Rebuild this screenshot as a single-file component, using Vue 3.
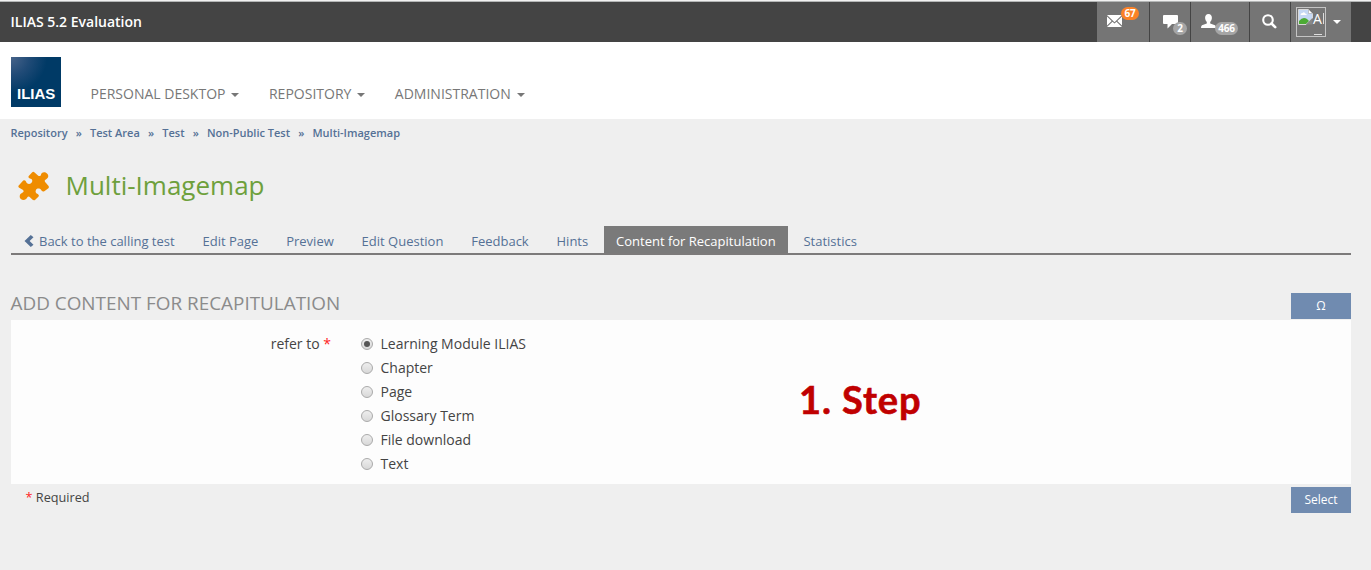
<script setup>
const menus = ['Personal Desktop', 'Repository', 'Administration']
const crumbs = ['Repository', 'Test Area', 'Test', 'Non-Public Test', 'Multi-Imagemap']
const tabs = ['Edit Page', 'Preview', 'Edit Question', 'Feedback', 'Hints', 'Content for Recapitulation', 'Statistics']
const activeTab = 'Content for Recapitulation'
const options = ['Learning Module ILIAS', 'Chapter', 'Page', 'Glossary Term', 'File download', 'Text']
</script>

<template>
  <div class="page">
    <div class="topbar">
      <div class="site">ILIAS 5.2 Evaluation</div>
      <div class="tools">
        <div class="tool mail">
          <svg width="15" height="12" viewBox="0 0 15 12">
            <path d="M0 0H15L7.5 7.2ZM0 1.4L4.7 5.9L0 10.5ZM15 1.4V10.5L10.3 5.9ZM5.5 6.7L7.5 8.6L9.5 6.7L15 12H0Z" fill="#fff" />
          </svg>
          <span class="badge hot">67</span>
        </div>
        <div class="tool chat">
          <svg width="15" height="14" viewBox="0 0 15 14">
            <path d="M1 0H14Q15 0 15 1V8Q15 9 14 9H9L4.5 13.5V9H1Q0 9 0 8V1Q0 0 1 0Z" fill="#fff" />
          </svg>
          <span class="badge">2</span>
        </div>
        <div class="tool user">
          <svg width="15" height="14" viewBox="0 0 15 14">
            <path d="M7.5 0C9.8 0 11 1.7 10.9 4C10.8 6 9.9 7 9.2 8V9.4L14 11.3Q15 11.8 15 14H0Q0 11.8 1 11.3L5.8 9.4V8C5.1 7 4.2 6 4.1 4C4 1.7 5.2 0 7.5 0Z" fill="#fff" />
          </svg>
          <span class="badge">466</span>
        </div>
        <div class="tool search">
          <svg width="15" height="15" viewBox="0 0 15 15" fill="none" stroke="#fff">
            <circle cx="6" cy="6" r="4.8" stroke-width="2.1" />
            <path d="M9.5 9.5L13.2 13.2" stroke-width="2.6" stroke-linecap="round" />
          </svg>
        </div>
        <div class="tool avatar">
          <div class="photo">
            <svg width="15" height="16" viewBox="0 0 15 16">
              <path d="M.5 .5H10.5L14.5 4.5V9L8 15.5H.5Z" fill="#c5d8f5" stroke="#d8d8d8" />
              <path d="M10.5 .5V4.5H14.5Z" fill="#fff" stroke="#aaa" stroke-width=".6" />
              <path d="M2.5 6Q2.5 4 4.5 4Q6 2.5 7.2 4.5Q9 4.5 8.7 6Z" fill="#fff" />
              <path d="M1 15V12Q5 7 9 10L11 12L8 15Z" fill="#4caa35" />
              <path d="M8 15.5L14.5 9V15.5Z" fill="#888" />
            </svg>
            <span class="alt">A</span><i class="bar"></i><i class="cut"></i>
          </div>
          <i class="caret"></i>
        </div>
      </div>
    </div>

    <header class="header">
      <div class="logo">ILIAS</div>
      <nav class="menu">
        <a v-for="m in menus" :key="m">{{ m }}<i class="caret"></i></a>
      </nav>
    </header>

    <div class="crumbs">
      <template v-for="(c, i) in crumbs" :key="c">
        <span v-if="i" class="sep">»</span><a>{{ c }}</a>
      </template>
    </div>

    <div class="title">
      <svg width="32" height="30" viewBox="0 0 32 30">
        <path d="M.5 14.7L5.2 9.6Q6.8 8.8 8 10.5C8.5 13 11.5 13.8 13.3 12C15.2 10 14.3 7.6 11.8 7.4Q9.9 6.8 10.5 5.3L14 1.4Q15.3 .3 16.6 1.4L20 4.4Q21.3 5.8 22.9 4.2C23 2 25.5 .6 28 1.8C31 3.4 31 7 28.2 8.2Q26 9 26.9 10.8L30.6 15Q31.4 16.3 30.4 17.2L26.3 20.3Q24.7 21.1 23.5 19.5C22.3 17.1 19.2 16.9 17.9 18.9C17 20.9 18 22.4 19.8 23Q21.6 24 20.6 25.5L17 28.9Q15.8 29.7 14.6 28.8L12.2 26.5Q10.5 24.7 9.2 26.5C8.2 29.3 4.6 29.4 2.8 28C1 26.2 1.5 23 4 22Q6.5 21 5.1 19.1L.8 16.4Q0 15.5 .5 14.7Z" fill="#ef8c00" />
      </svg>
      <h1>Multi-Imagemap</h1>
    </div>

    <nav class="tabs">
      <a class="back">
        <svg width="10" height="12" viewBox="0 0 10 12"><path d="M6.8 0L9.5 2.2L5.6 6L9.5 9.8L6.8 12L.5 6Z" fill="#557196" /></svg>
        <span>Back to the calling test</span>
      </a>
      <a v-for="t in tabs" :key="t" :class="{ active: t === activeTab }">{{ t }}</a>
    </nav>

    <div class="formhead">
      <h2>Add Content for Recapitulation</h2>
      <button class="btn">Ω</button>
    </div>

    <div class="form">
      <div class="label">refer to <b>*</b></div>
      <div class="options">
        <div v-for="(o, i) in options" :key="o" class="option">
          <i class="radio" :class="{ on: i === 0 }"></i><span>{{ o }}</span>
        </div>
      </div>
      <div class="step">1. Step</div>
    </div>

    <div class="formfoot">
      <div class="required"><b>*</b> Required</div>
      <button class="btn">Select</button>
    </div>
  </div>
</template>

<style>
body { margin: 0; background: #efefef; }
</style>

<style scoped>
.page { width: 1371px; height: 570px; overflow: hidden; background: #efefef; font-family: "Open Sans", sans-serif; color: #444; }
.page * { box-sizing: border-box; }
.topbar { height: 42px; border-top: 1px solid #f1f1f1; background: #444; display: flex; justify-content: space-between; padding: 0 20px 0 10.5px; box-shadow: inset 0 1px #b4b6b6; }
.site { color: #fff; font-weight: 600; font-size: 14px; line-height: 41px; }
.tools { display: flex; gap: 1px; margin-top: 1px; }
.tool { height: 40px; background: #757575; position: relative; }
.tool > svg { position: absolute; }
.mail { width: 52px; }
.mail > svg { left: 10px; top: 13px; }
.chat { width: 40px; }
.chat > svg { left: 13px; top: 13px; }
.user { width: 58px; }
.user > svg { left: 10px; top: 12px; }
.search { width: 40px; }
.search > svg { left: 12px; top: 12px; }
.avatar { width: 60px; display: flex; align-items: center; padding-left: 5px; gap: 7px; }
.badge { position: absolute; height: 13px; line-height: 13px; border-radius: 7px; text-align: center; background: #a5a5a5; color: #fff; font-size: 10px; font-weight: 700; letter-spacing: -.2px; }
.mail .badge { left: 24px; top: 5px; width: 18px; }
.chat .badge { left: 23px; top: 20px; width: 14px; }
.user .badge { left: 24px; top: 20px; width: 23px; }
.mail .badge.hot { background: #fa8228; }
.photo { width: 30px; height: 30px; border: 1px solid #c4c4c4; position: relative; overflow: hidden; }
.photo svg { position: absolute; left: 1px; top: 1px; }
.alt { position: absolute; left: 16px; top: 1px; color: #fff; font-size: 14px; line-height: 20px; }
.bar { position: absolute; left: 26px; top: 5px; width: 1px; height: 11px; background: #ddd; }
.cut { position: absolute; left: 17px; top: 26px; width: 8px; height: 1px; background: #ddd; }
.caret { display: inline-block; border: 4px solid transparent; border-top-color: currentColor; border-bottom: 0; }
.avatar .caret { color: #fff; }
.header { height: 77px; background: #fff; display: flex; padding: 15px 0 0 11px; }
.logo { width: 50px; height: 50px; background: radial-gradient(circle at 0 0, #48648a 0, #214b77 18px, #003a66 36px); color: #fff; font: 700 15px/15px "Liberation Sans", Arial, sans-serif; padding: 29px 0 0 6px; }
.menu { display: flex; gap: 29.5px; margin-left: 29.5px; padding-top: 27px; }
.menu a { font-size: 14px; line-height: 20px; text-transform: uppercase; color: #777; white-space: nowrap; }
.menu .caret { margin-left: 6px; vertical-align: middle; }
.crumbs { height: 28px; padding-left: 10.5px; display: flex; font-size: 11px; line-height: 28px; font-weight: 600; color: #557196; }
.sep { margin: 0 8.15px; }
.title { display: flex; height: 79px; padding: 24px 0 0 18px; }
h1 { margin: 0 0 0 15.5px; font-size: 26px; font-weight: 400; line-height: 28px; color: #6ea03c; }
.tabs { margin: 0 20px 0 11px; height: 29px; border-bottom: 2px solid #7c7a7a; display: flex; gap: 3.84px; }
.tabs a { height: 27px; padding: 0 12px; font-size: 13px; line-height: 31px; color: #557196; white-space: nowrap; }
.tabs .back { display: flex; gap: 5px; padding-left: 13px; }
.back svg { margin-top: 9px; }
.tabs .active { background: #7a7a7a; color: #fff; }
.formhead { margin: 38px 20px 0 10.5px; height: 27px; display: flex; justify-content: space-between; }
h2 { margin: 0; font-size: 18.9px; line-height: 20px; font-weight: 400; color: #8b8b8b; text-transform: uppercase; }
.btn { width: 60px; height: 26px; border: 0; padding: 0; background: #708bb0; color: #fff; font: 12px/26px "Open Sans", sans-serif; }
.form { margin: 0 20px 0 11px; height: 164px; background: #fdfdfd; display: flex; padding-top: 12px; font-size: 14px; line-height: 24px; }
.label { width: 320px; text-align: right; }
.label b, .required b { color: #f22; font-weight: 400; }
.options { width: 468px; padding-left: 30px; }
.option { display: flex; align-items: center; height: 24px; gap: 7.5px; }
.radio { width: 12px; height: 12px; border-radius: 50%; border: 1px solid #aaa; background: linear-gradient(#eee, #d8d8d8); display: flex; align-items: center; justify-content: center; }
.radio.on::after { content: ""; width: 6px; height: 6px; border-radius: 50%; background: #555; }
.step { font: 700 38px/46px Lato, sans-serif; color: #c00000; padding-top: 43.5px; letter-spacing: .9px; -webkit-text-stroke: .6px #c00000; }
.formfoot { margin: 3px 20px 0 11px; display: flex; justify-content: space-between; }
.required { padding-left: 14.5px; font-size: 12.7px; line-height: 20px; }
</style>
